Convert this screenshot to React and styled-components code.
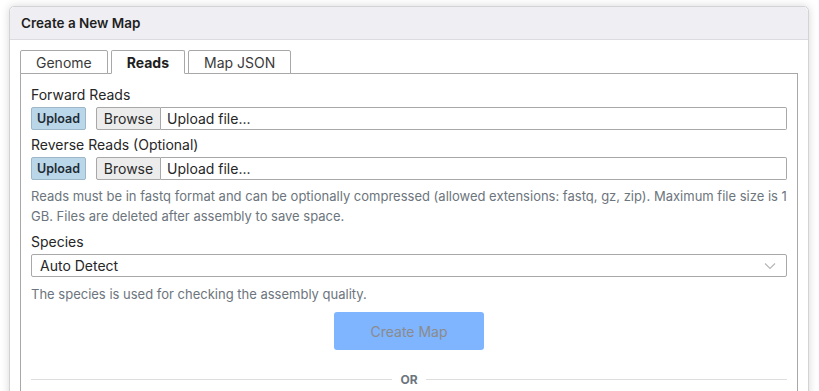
import React from "react";
import styled, { createGlobalStyle } from "styled-components";

const Global = createGlobalStyle`
  html, body { margin: 0; padding: 0; background: #fff; }
  body { font-family: Inter, "Noto Sans", "Liberation Sans", sans-serif; color: #212529; }
  * { box-sizing: border-box; }
`;

const Page = styled.div`
  padding: 6px 10px 0 9px;
  height: 391px;
  overflow: hidden;
`;

const Card = styled.div`
  width: 800px;
  border: 1px solid #d3d3d6;
  border-radius: 5px;
  background: #fff;
  box-shadow: 0 0 9px rgba(0, 0, 0, 0.16);
`;

const CardHeader = styled.div`
  height: 33px;
  background: #efeff3;
  border-bottom: 1px solid #dcdce0;
  border-radius: 5px 5px 0 0;
  display: flex;
  align-items: center;
  padding: 0 11px;
  font-size: 13.5px;
  font-weight: 600;
  color: #1f1f1f;
`;

const CardBody = styled.div`
  padding: 10px 10px 20px 10px;
`;

const TabList = styled.div`
  display: flex;
  gap: 3px;
  height: 24px;
  position: relative;
  z-index: 1;
`;

const Tab = styled.div`
  height: 24px;
  padding: 0 ${(p) => p.$pad}px;
  border: 1px solid #a8a8a8;
  border-bottom: ${(p) => (p.$active ? "1px solid #fff" : "1px solid #a8a8a8")};
  border-radius: 2px 2px 0 0;
  background: #fff;
  display: flex;
  align-items: center;
  justify-content: center;
  font-size: 14px;
  font-weight: ${(p) => (p.$active ? 700 : 400)};
  color: ${(p) => (p.$active ? "#1f1f1f" : "#3a3a3a")};
`;

const Panel = styled.div`
  margin-top: -1px;
  border: 1px solid #a8a8a8;
  padding: 11px 10px 30px 10px;
  min-height: 400px;
`;

const Label = styled.div`
  font-size: 14px;
  line-height: 20px;
  color: #262626;
  margin-bottom: 2px;
`;

const UploadRow = styled.div`
  display: flex;
  align-items: stretch;
  gap: 10px;
  height: 23px;
  margin-bottom: ${(p) => p.$mb}px;
`;

const UploadButton = styled.div`
  width: 55px;
  background: #bad7ea;
  border: 1px solid #9db7c9;
  border-radius: 2px;
  display: flex;
  align-items: center;
  justify-content: center;
  font-size: 12.5px;
  font-weight: 600;
  color: #1f2b33;
`;

const FileGroup = styled.div`
  flex: 1;
  display: flex;
`;

const BrowseButton = styled.div`
  width: 65px;
  background: #ececec;
  border: 1px solid #a8a8a8;
  border-radius: 2px 0 0 2px;
  display: flex;
  align-items: center;
  justify-content: center;
  font-size: 14px;
  color: #2a2a2a;
`;

const FileInput = styled.div`
  flex: 1;
  border: 1px solid #a8a8a8;
  border-left: none;
  border-radius: 0 2px 2px 0;
  display: flex;
  align-items: center;
  padding: 0 6px;
  font-size: 14px;
  color: #262626;
`;

const Help = styled.p`
  margin: ${(p) => p.$mt}px 0 ${(p) => p.$mb || 0}px 0;
  font-size: 13px;
  line-height: 20px;
  color: #6c757d;
`;

const Select = styled.div`
  margin-top: 2px;
  height: 23px;
  border: 1px solid #a8a8a8;
  border-radius: 2px;
  display: flex;
  align-items: center;
  justify-content: space-between;
  padding: 0 10px 0 8px;
  font-size: 14px;
  color: #262626;
`;

const ButtonWrap = styled.div`
  display: flex;
  justify-content: center;
  margin-top: 8px;
`;

const PrimaryButton = styled.div`
  width: 150px;
  height: 38px;
  background: #7fb4ff;
  border-radius: 3px;
  display: flex;
  align-items: center;
  justify-content: center;
  font-size: 14px;
  color: #8b8b8b;
`;

const Divider = styled.div`
  display: flex;
  align-items: center;
  gap: 8px;
  margin-top: 22px;
  font-size: 12px;
  font-weight: 700;
  color: #6c757d;
  &::before, &::after {
    content: "";
    flex: 1;
    height: 1px;
    background: #dedede;
  }
`;

const Chevron = () => (
  <svg width="12" height="8" viewBox="0 0 12 8" fill="none">
    <path d="M1 1.5 L6 6.5 L11 1.5" stroke="#b5b5b5" strokeWidth="1.1" />
  </svg>
);

export default function App() {
  return (
    <Page>
      <Global />
      <Card>
        <CardHeader>Create a New Map</CardHeader>
        <CardBody>
          <TabList>
            <Tab $pad={15}>Genome</Tab>
            <Tab $pad={15} $active>Reads</Tab>
            <Tab $pad={15}>Map JSON</Tab>
          </TabList>
          <Panel>
            <Label>Forward Reads</Label>
            <UploadRow $mb={5}>
              <UploadButton>Upload</UploadButton>
              <FileGroup>
                <BrowseButton>Browse</BrowseButton>
                <FileInput>Upload file...</FileInput>
              </FileGroup>
            </UploadRow>
            <Label>Reverse Reads (Optional)</Label>
            <UploadRow $mb={6}>
              <UploadButton>Upload</UploadButton>
              <FileGroup>
                <BrowseButton>Browse</BrowseButton>
                <FileInput>Upload file...</FileInput>
              </FileGroup>
            </UploadRow>
            <Help $mt={0} $mb={6}>
              Reads must be in fastq format and can be optionally compressed (allowed extensions: fastq, gz, zip). Maximum file size is 1 GB. Files are deleted after assembly to save space.
            </Help>
            <Label>Species</Label>
            <Select>
              <span>Auto Detect</span>
              <Chevron />
            </Select>
            <Help $mt={7}>The species is used for checking the assembly quality.</Help>
            <ButtonWrap>
              <PrimaryButton>Create Map</PrimaryButton>
            </ButtonWrap>
            <Divider>OR</Divider>
          </Panel>
        </CardBody>
      </Card>
    </Page>
  );
}
